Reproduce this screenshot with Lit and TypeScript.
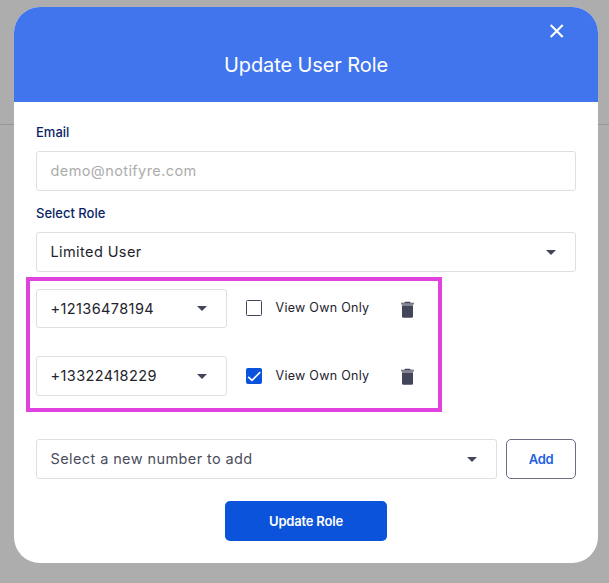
import { LitElement, html, css, svg } from "lit";
import { customElement, property, state } from "lit/decorators.js";
import { classMap } from "lit/directives/class-map.js";

@customElement("select-box")
class SelectBox extends LitElement {
  @property() value = "";
  @property({ type: Boolean, reflect: true }) muted = false;

  static styles = css`
    :host {
      display: flex;
      align-items: center;
      justify-content: space-between;
      box-sizing: border-box;
      height: 40px;
      padding: 0 19px 0 13.5px;
      border: 1px solid #dfdfdf;
      border-radius: 3px;
      background: #fff;
      color: #22232d;
      font-size: 14.5px;
      letter-spacing: 0.4px;
      line-height: 18px;
      white-space: nowrap;
    }
    :host([muted]) {
      color: #4b4d5c;
    }
    .arrow {
      display: block;
      width: 10px;
      height: 5px;
      fill: #43465a;
    }
  `;

  render() {
    return html`<span>${this.value}</span>
      <svg class="arrow" viewBox="0 0 10 5">${svg`<path d="M0 0h10L5 5z" />`}</svg>`;
  }
}

@customElement("number-row")
class NumberRow extends LitElement {
  @property() number = "";
  @property({ type: Boolean }) own = false;

  static styles = css`
    :host {
      display: flex;
      align-items: flex-start;
      font-size: 12.5px;
      color: #22232d;
    }
    select-box {
      width: 191px;
      height: 100%;
    }
    .check {
      display: flex;
      align-items: center;
      align-self: center;
      height: 16px;
      margin-left: 19px;
      margin-bottom: 0.5px;
      gap: 13.5px;
      letter-spacing: 0.28px;
      white-space: nowrap;
      width: 155px;
    }
    .text {
      line-height: 16px;
    }
    .box {
      box-sizing: border-box;
      flex: none;
      width: 16px;
      height: 16px;
      border: 1px solid #43465a;
      border-radius: 1.5px;
    }
    .box.on {
      border-color: #0a53da;
      background: #0a53da;
    }
    .tick {
      display: block;
      width: 14px;
      height: 14px;
      fill: none;
      stroke: #fff;
      stroke-width: 1.7;
    }
    .bin {
      display: block;
      width: 13px;
      height: 17px;
      margin-top: 12px;
      fill: #43465a;
    }
    .lid {
      fill: #868894;
    }
  `;

  render() {
    return html`
      <select-box .value=${this.number}></select-box>
      <div class="check">
        <span class=${classMap({ box: true, on: this.own })}>
          ${this.own
            ? html`<svg class="tick" viewBox="0 0 14 14"><path d="M1.2 7.8 5 11.4 13.2 3.1" /></svg>`
            : ""}
        </span>
        <span class="text">View Own Only</span>
      </div>
      <svg class="bin" viewBox="0 0 13 17">
        <path d="M4 .8h5l.6.9H13v1H0v-1h3.4z" />
        <path class="lid" d="M0 2.5h13v1H0zM1 3.5h11v1H1z" />
        <path d="M1 4.5h11v10.7a1.5 1.5 0 0 1-1.5 1.5h-8A1.5 1.5 0 0 1 1 15.200z" />
      </svg>
    `;
  }
}

@customElement("app-root")
class AppRoot extends LitElement {
  @state() private numbers = [
    { number: "+12136478194", own: false },
    { number: "+13322418229", own: true },
  ];

  static styles = css`
    :host {
      display: block;
      box-sizing: border-box;
      height: 583px;
      padding: 7px 11px 20px 14px;
      overflow: hidden;
      background: linear-gradient(#979797, #979797) 0 124px / 100% 1px no-repeat #adadad;
      font-family: Inter, "Liberation Sans", sans-serif;
    }
    .modal {
      width: 584px;
      height: 556px;
      border-radius: 26px;
      overflow: hidden;
      background: #fff;
    }
    header {
      display: flex;
      flex-direction: column;
      box-sizing: border-box;
      height: 95px;
      padding-top: 17px;
      background: #4175ee;
      color: #fff;
    }
    .close {
      display: block;
      align-self: flex-end;
      width: 14px;
      height: 14px;
      margin-right: 34px;
      fill: none;
      stroke: #fff;
      stroke-width: 2.2;
    }
    h1 {
      margin: 14px 0 0;
      font-size: 20px;
      line-height: 26px;
      font-weight: 400;
      letter-spacing: -0.1px;
      text-align: center;
    }
    .body {
      display: flex;
      flex-direction: column;
      padding: 21px 22px 0;
    }
    .label {
      height: 18px;
      line-height: 18px;
      margin-bottom: 10px;
      font-size: 13px;
      font-weight: 500;
      color: #0b1f66;
    }
    .label.role {
      margin-top: 13px;
    }
    .input {
      box-sizing: border-box;
      height: 40px;
      padding: 0 13.5px;
      border: 1px solid #dfdfdf;
      border-radius: 3px;
      line-height: 38px;
      font-size: 14.5px;
      letter-spacing: 0.4px;
      color: #acacac;
    }
    .marked {
      display: grid;
      grid-template-rows: 39px 40px;
      row-gap: 28px;
      box-sizing: border-box;
      width: 416px;
      height: 135px;
      margin: 5px 0 0 -10px;
      padding: 8px 6px;
      border: 4px solid #e142dd;
    }
    .adding {
      display: flex;
      gap: 9px;
      margin-top: 27px;
    }
    .adding select-box {
      flex: 1;
    }
    button {
      box-sizing: border-box;
      height: 40px;
      padding: 0;
      border-radius: 5px;
      font-family: inherit;
      font-size: 13px;
      font-weight: 600;
      letter-spacing: -0.2px;
    }
    .add {
      width: 70px;
      border: 1px solid #6b6d83;
      background: #fff;
      color: #1f5fe0;
      letter-spacing: -0.3px;
    }
    .save {
      align-self: center;
      width: 162px;
      margin-top: 22px;
      border: 0;
      background: #0a53da;
      color: #fff;
    }
  `;

  render() {
    return html`
      <div class="modal">
        <header>
          <svg class="close" viewBox="0 0 14 14"><path d="M.7 1l12 12M12.700 1L.7 13" /></svg>
          <h1>Update User Role</h1>
        </header>
        <div class="body">
          <div class="label">Email</div>
          <div class="input">demo@notifyre.com</div>
          <div class="label role">Select Role</div>
          <select-box value="Limited User"></select-box>
          <div class="marked">
            ${this.numbers.map(
              (n) => html`<number-row .number=${n.number} .own=${n.own}></number-row>`
            )}
          </div>
          <div class="adding">
            <select-box muted value="Select a new number to add"></select-box>
            <button class="add">Add</button>
          </div>
          <button class="save">Update Role</button>
        </div>
      </div>
    `;
  }
}
